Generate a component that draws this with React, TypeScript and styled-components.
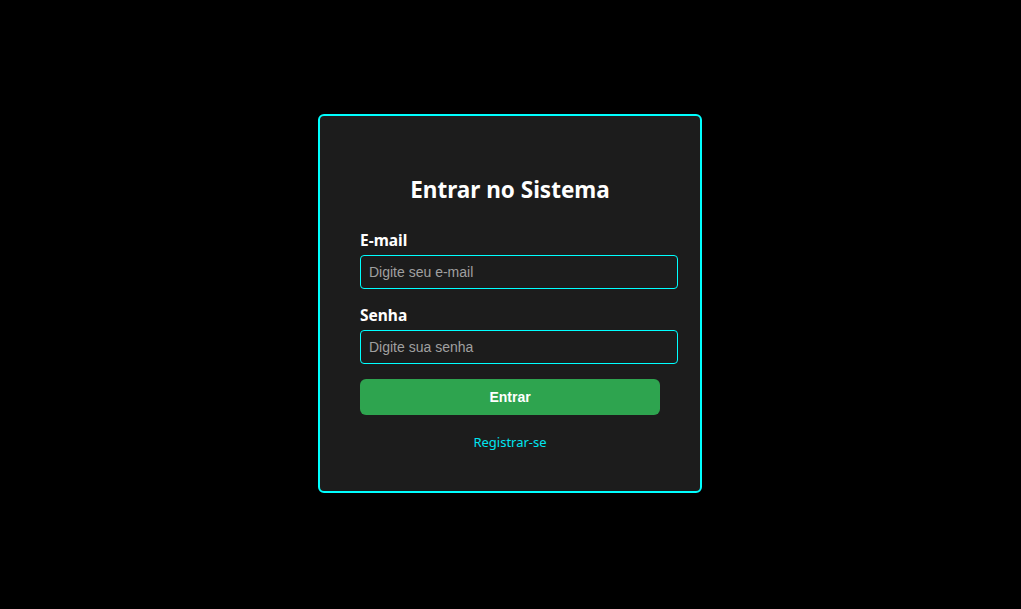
import React from "react";
import styled, { createGlobalStyle } from "styled-components";

const Global = createGlobalStyle`
  html, body { margin: 0; padding: 0; background: #000; }
  body { font-family: "Noto Sans", "Open Sans", sans-serif; }
  * { box-sizing: content-box; }
`;

const Page = styled.div`
  min-height: 100vh;
  box-sizing: border-box;
  padding: 0 1px 2px 0;
  display: flex;
  align-items: center;
  justify-content: center;
  background: #000;
`;

const Card = styled.div`
  width: 300px;
  padding: 40px 40px 39px;
  background: #1c1c1c;
  border: 2px solid #00ffff;
  border-radius: 6px;
`;

const Title = styled.h2`
  margin: 20px 0 25px;
  font-family: "Noto Sans", sans-serif;
  font-size: 22.5px;
  line-height: 28px;
  font-weight: 700;
  color: #fff;
  text-align: center;
`;

const Group = styled.div`
  margin-bottom: 15px;
`;

const Label = styled.label`
  display: block;
  margin-bottom: 3px;
  font-family: "Noto Sans", sans-serif;
  font-size: 15.5px;
  line-height: 23px;
  font-weight: 700;
  color: #fff;
`;

const Input = styled.input`
  display: block;
  width: 100%;
  padding: 8px;
  height: 16px;
  background: #1c1c1c;
  border: 1px solid #00ffff;
  border-radius: 4px;
  color: #fff;
  font-family: "Liberation Sans", Arial, sans-serif;
  font-size: 14px;
  outline: none;
  &::placeholder { color: #a0a0a0; }
`;

const Button = styled.button`
  display: block;
  width: 300px;
  height: 36px;
  padding: 0;
  margin: 0;
  background: #2ea44f;
  border: none;
  border-radius: 6px;
  color: #fff;
  font-family: "Liberation Sans", Arial, sans-serif;
  font-size: 14px;
  font-weight: 700;
  cursor: pointer;
`;

const LinkRow = styled.p`
  margin: 17px 0 0;
  text-align: center;
  font-family: "Noto Sans", sans-serif;
  font-size: 13px;
  line-height: 20px;
`;

const Link = styled.a`
  color: #00e5f0;
  text-decoration: none;
`;

export default function App() {
  return (
    <Page>
      <Global />
      <Card>
        <Title>Entrar no Sistema</Title>
        <Group>
          <Label htmlFor="email">E-mail</Label>
          <Input id="email" type="email" placeholder="Digite seu e-mail" />
        </Group>
        <Group>
          <Label htmlFor="senha">Senha</Label>
          <Input id="senha" type="password" placeholder="Digite sua senha" />
        </Group>
        <Button>Entrar</Button>
        <LinkRow>
          <Link href="#">Registrar-se</Link>
        </LinkRow>
      </Card>
    </Page>
  );
}
